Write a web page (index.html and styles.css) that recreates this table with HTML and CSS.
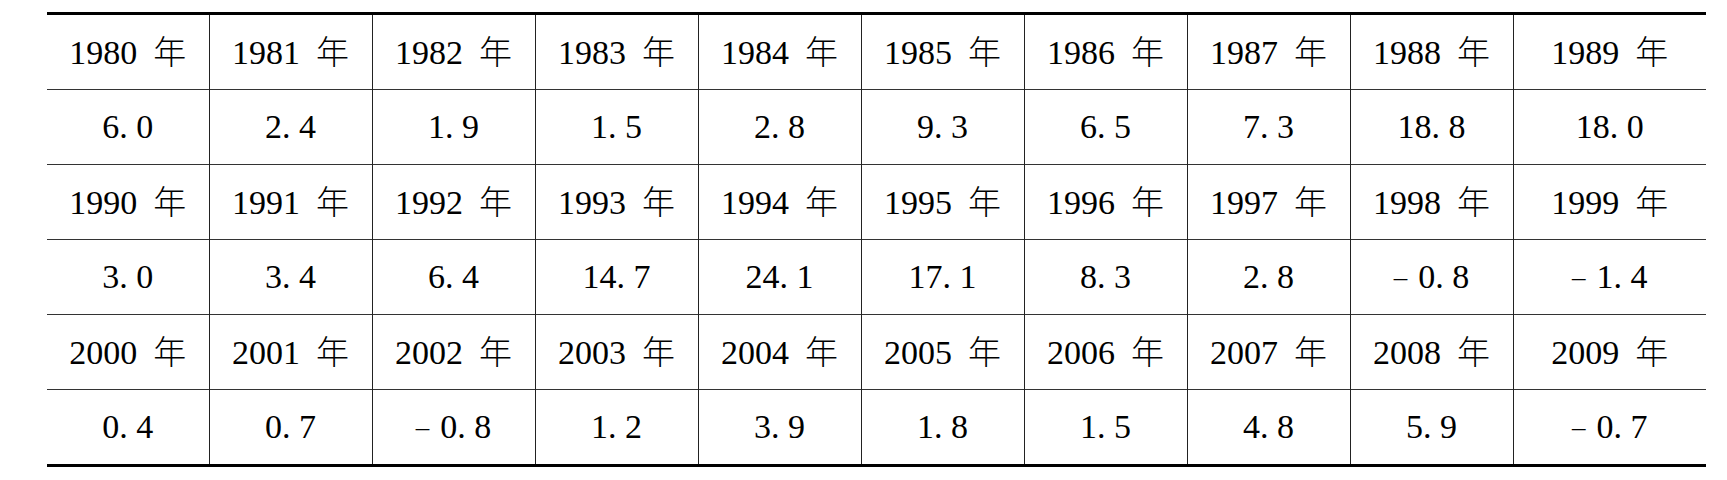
FILE: index.html
```html
<!DOCTYPE html>
<html lang="zh">
<head>
<meta charset="utf-8">
<link rel="stylesheet" href="styles.css">
</head>
<body>
<table class="data">
  <colgroup>
    <col class="c-first">
    <col class="c-mid"><col class="c-mid"><col class="c-mid"><col class="c-mid">
    <col class="c-mid"><col class="c-mid"><col class="c-mid"><col class="c-mid">
    <col class="c-last">
  </colgroup>
  <tbody>
    <tr class="yr first">
      <td>1980<span class="n">年</span></td><td>1981<span class="n">年</span></td><td>1982<span class="n">年</span></td><td>1983<span class="n">年</span></td><td>1984<span class="n">年</span></td><td>1985<span class="n">年</span></td><td>1986<span class="n">年</span></td><td>1987<span class="n">年</span></td><td>1988<span class="n">年</span></td><td>1989<span class="n">年</span></td>
    </tr>
    <tr class="val">
      <td>6. 0</td><td>2. 4</td><td>1. 9</td><td>1. 5</td><td>2. 8</td><td>9. 3</td><td>6. 5</td><td>7. 3</td><td>18. 8</td><td>18. 0</td>
    </tr>
    <tr class="yr">
      <td>1990<span class="n">年</span></td><td>1991<span class="n">年</span></td><td>1992<span class="n">年</span></td><td>1993<span class="n">年</span></td><td>1994<span class="n">年</span></td><td>1995<span class="n">年</span></td><td>1996<span class="n">年</span></td><td>1997<span class="n">年</span></td><td>1998<span class="n">年</span></td><td>1999<span class="n">年</span></td>
    </tr>
    <tr class="val">
      <td>3. 0</td><td>3. 4</td><td>6. 4</td><td>14. 7</td><td>24. 1</td><td>17. 1</td><td>8. 3</td><td>2. 8</td><td><span class="neg">–</span>0. 8</td><td><span class="neg">–</span>1. 4</td>
    </tr>
    <tr class="yr">
      <td>2000<span class="n">年</span></td><td>2001<span class="n">年</span></td><td>2002<span class="n">年</span></td><td>2003<span class="n">年</span></td><td>2004<span class="n">年</span></td><td>2005<span class="n">年</span></td><td>2006<span class="n">年</span></td><td>2007<span class="n">年</span></td><td>2008<span class="n">年</span></td><td>2009<span class="n">年</span></td>
    </tr>
    <tr class="val last">
      <td>0. 4</td><td>0. 7</td><td><span class="neg">–</span>0. 8</td><td>1. 2</td><td>3. 9</td><td>1. 8</td><td>1. 5</td><td>4. 8</td><td>5. 9</td><td><span class="neg">–</span>0. 7</td>
    </tr>
  </tbody>
</table>
</body>
</html>
```

FILE: styles.css
```css
html, body {
  margin: 0;
  padding: 0;
  background: #ffffff;
}

body {
  padding: 12px 0 0 47px;
  font-family: "Liberation Serif", "Noto Sans CJK SC", serif;
  color: #000000;
}

.data {
  border-collapse: collapse;
  table-layout: fixed;
  width: 1659px;
  border-top: 3px solid #000000;
  border-bottom: 3px solid #000000;
}

.c-first { width: 162px; }
.c-mid { width: 163px; }
.c-last { width: 193px; }

.data td {
  height: 74px;
  padding: 0;
  text-align: center;
  vertical-align: middle;
  font-size: 34px;
  line-height: 1;
  border-top: 1px solid #333333;
  border-left: 1px solid #222222;
  white-space: nowrap;
}

.data tr.first td { border-top: 3px solid #000000; }
.data td:first-child { border-left: none; }

.n {
  font-family: "Noto Sans CJK SC", sans-serif;
  font-weight: 300;
  font-size: 33px;
  margin-left: 16px;
}

.neg {
  display: inline-block;
  font-size: 27px;
  margin-right: 11px;
  vertical-align: 2px;
}
```
